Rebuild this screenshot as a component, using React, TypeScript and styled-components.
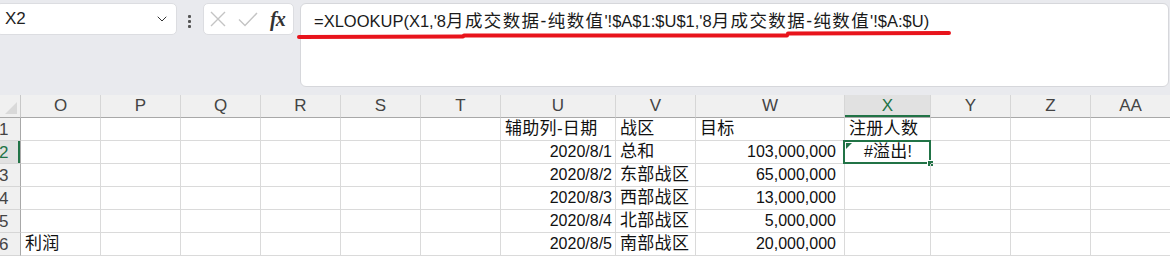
import React from "react";
import styled, { createGlobalStyle } from "styled-components";
import { ChevronDown } from "lucide-react";

const GREEN = "#217346";
const COLS = [
  { key: "O", w: 80 },
  { key: "P", w: 80 },
  { key: "Q", w: 80 },
  { key: "R", w: 80 },
  { key: "S", w: 80 },
  { key: "T", w: 80 },
  { key: "U", w: 115 },
  { key: "V", w: 80 },
  { key: "W", w: 149 },
  { key: "X", w: 86 },
  { key: "Y", w: 80 },
  { key: "Z", w: 80 },
  { key: "AA", w: 80 },
];
const TEMPLATE = `21px ${COLS.map((c) => c.w + "px").join(" ")}`;

type Align = "left" | "right" | "center";
type CellData = { text: string; align: Align; pad?: number };
type RowData = { n: number; cells: Record<string, CellData> };

const L = (text: string): CellData => ({ text, align: "left" });
const R = (text: string): CellData => ({ text, align: "right" });
const N = (text: string): CellData => ({ text, align: "right", pad: 8 });

const ROWS: RowData[] = [
  { n: 1, cells: { U: L("辅助列-日期"), V: L("战区"), W: L("目标"), X: L("注册人数") } },
  { n: 2, cells: { U: R("2020/8/1"), V: L("总和"), W: N("103,000,000"), X: { text: "#溢出!", align: "center" } } },
  { n: 3, cells: { U: R("2020/8/2"), V: L("东部战区"), W: N("65,000,000") } },
  { n: 4, cells: { U: R("2020/8/3"), V: L("西部战区"), W: N("13,000,000") } },
  { n: 5, cells: { U: R("2020/8/4"), V: L("北部战区"), W: N("5,000,000") } },
  { n: 6, cells: { O: L("利润"), U: R("2020/8/5"), V: L("南部战区"), W: N("20,000,000") } },
];

const Global = createGlobalStyle`
  html, body { margin: 0; padding: 0; background: #ffffff; overflow: hidden; }
  body { font-family: "Liberation Sans", "Noto Sans CJK SC", sans-serif; }
`;

const Page = styled.div`
  position: relative;
  width: 1170px;
  height: 256px;
  overflow: hidden;
  background: #ffffff;
`;

const Toolbar = styled.div`
  display: flex;
  align-items: flex-start;
  height: 95px;
  box-sizing: border-box;
  padding-top: 3px;
  background: #e9eaee;
`;

const NameBox = styled.div`
  display: flex;
  flex-shrink: 0;
  align-items: center;
  justify-content: space-between;
  box-sizing: border-box;
  margin-left: -4px;
  width: 181px;
  height: 32px;
  padding: 0 6px 0 8px;
  background: #ffffff;
  border: 1px solid #dcdde1;
  border-radius: 5px;
  font-size: 17px;
  color: #1f1f1f;
`;

const MoreDots = styled.div`
  display: flex;
  flex-shrink: 0;
  flex-direction: column;
  gap: 2px;
  margin: 12px 12px 0 11px;
  span {
    width: 3px;
    height: 3px;
    border-radius: 1px;
    background: #555;
  }
`;

const FxBox = styled.div`
  display: flex;
  flex-shrink: 0;
  align-items: center;
  box-sizing: border-box;
  width: 91px;
  height: 32px;
  padding: 0 4px 0 6px;
  gap: 12px;
  background: #ffffff;
  border: 1px solid #dcdde1;
  border-radius: 5px;
`;

const FxLabel = styled.span`
  font-family: "Liberation Serif", "DejaVu Serif", serif;
  font-style: italic;
  font-weight: bold;
  font-size: 20px;
  color: #333;
  letter-spacing: -1px;
`;

const FormulaBox = styled.div`
  flex: 1;
  box-sizing: border-box;
  margin-left: 6px;
  margin-right: 1px;
  height: 84px;
  padding: 5px 0 0 13px;
  background: #ffffff;
  border: 1px solid #d6d7db;
  border-radius: 6px;
  font-size: 16.5px;
  line-height: 24px;
  color: #1a1a1a;
  white-space: nowrap;
`;

const Cjk = styled.span`
  font-size: 17.5px;
  letter-spacing: 1.4px;
`;

const CellCjk = styled.span`
  font-size: 17px;
  letter-spacing: 0.3px;
`;

const Annotation = styled.svg`
  position: absolute;
  left: 0;
  top: 0;
  pointer-events: none;
`;

const Row = styled.div`
  display: grid;
  grid-template-columns: ${TEMPLATE};
  grid-template-rows: 23px;
  height: 23px;
`;

const Corner = styled.div`
  position: relative;
  box-sizing: border-box;
  background: #f0f0f0;
  border-right: 1px solid #c8c8c8;
  border-bottom: 1px solid #a8a8a8;
  &::after {
    content: "";
    position: absolute;
    right: 3px;
    bottom: 3px;
    border-style: solid;
    border-width: 0 0 12px 12px;
    border-color: transparent transparent #d9d9d9 transparent;
  }
`;

const ColHead = styled.div<{ $active?: boolean }>`
  box-sizing: border-box;
  background: ${(p) => (p.$active ? "#e1e1e1" : "#f0f0f0")};
  border-right: 1px solid #d6d6d6;
  border-bottom: 1px solid #a8a8a8;
  box-shadow: ${(p) => (p.$active ? `inset 0 -2px 0 ${GREEN}` : "none")};
  color: ${(p) => (p.$active ? GREEN : "#444")};
  font-size: 17px;
  line-height: 22px;
  text-align: center;
`;

const RowHead = styled.div<{ $active?: boolean }>`
  box-sizing: border-box;
  overflow: hidden;
  background: ${(p) => (p.$active ? "#e1e1e1" : "#f0f0f0")};
  border-right: 1px solid #a8a8a8;
  border-bottom: 1px solid #d6d6d6;
  box-shadow: ${(p) => (p.$active ? `inset -2px 0 0 ${GREEN}` : "none")};
  color: ${(p) => (p.$active ? GREEN : "#444")};
  font-size: 17px;
  line-height: 23px;
  text-indent: -1px;
  white-space: nowrap;
`;

const Cell = styled.div<{ $align: Align; $padRight: number }>`
  position: relative;
  box-sizing: border-box;
  height: 23px;
  border-right: 1px solid #dadada;
  border-bottom: 1px solid #dadada;
  padding: 0 ${(p) => p.$padRight}px 0 4px;
  font-size: 16px;
  line-height: 22px;
  color: #111;
  text-align: ${(p) => p.$align};
  white-space: nowrap;
`;

const Selection = styled.div`
  position: absolute;
  left: -2px;
  top: -1px;
  right: -1px;
  bottom: -1px;
  border: 2px solid ${GREEN};
  pointer-events: none;
`;

const ErrorFlag = styled.div`
  position: absolute;
  left: 1px;
  top: 1px;
  border-style: solid;
  border-width: 6px 6px 0 0;
  border-color: ${GREEN} transparent transparent transparent;
`;

const FillHandle = styled.div`
  position: absolute;
  right: -5px;
  bottom: -5px;
  width: 5px;
  height: 5px;
  background: ${GREEN};
  border: 1px solid #ffffff;
`;

function splitCjk(s: string) {
  const parts: { t: string; cjk: boolean }[] = [];
  const re = /([\u4e00-\u9fff](?:[\u4e00-\u9fff-]*[\u4e00-\u9fff])?)/g;
  let last = 0;
  let m: RegExpExecArray | null;
  while ((m = re.exec(s))) {
    if (m.index > last) parts.push({ t: s.slice(last, m.index), cjk: false });
    parts.push({ t: m[1], cjk: true });
    last = m.index + m[1].length;
  }
  if (last < s.length) parts.push({ t: s.slice(last), cjk: false });
  return parts;
}

const FORMULA = "=XLOOKUP(X1,'8月成交数据-纯数值'!$A$1:$U$1,'8月成交数据-纯数值'!$A:$U)";

export default function App() {
  return (
    <Page>
      <Global />
      <Toolbar>
        <NameBox>
          <span>X2</span>
          <ChevronDown size={16} strokeWidth={1.5} color="#333" />
        </NameBox>
        <MoreDots>
          <span />
          <span />
          <span />
        </MoreDots>
        <FxBox>
          <svg width="16" height="16" viewBox="0 0 16 16">
            <path d="M1 1 L15 15 M15 1 L1 15" stroke="#c4c4c4" strokeWidth="1.4" fill="none" />
          </svg>
          <svg width="20" height="15" viewBox="0 0 20 15">
            <path d="M1 7.5 L7 13.5 L19 1" stroke="#c4c4c4" strokeWidth="1.4" fill="none" />
          </svg>
          <FxLabel>fx</FxLabel>
        </FxBox>
        <FormulaBox>
          {splitCjk(FORMULA).map((p, i) =>
            p.cjk ? <Cjk key={i}>{p.t}</Cjk> : <span key={i}>{p.t}</span>
          )}
        </FormulaBox>
      </Toolbar>

      <Row>
        <Corner />
        {COLS.map((c) => (
          <ColHead key={c.key} $active={c.key === "X"}>
            {c.key}
          </ColHead>
        ))}
      </Row>
      {ROWS.map((r) => (
        <Row key={r.n}>
          <RowHead $active={r.n === 2}>{r.n}</RowHead>
          {COLS.map((c) => {
            const d = r.cells[c.key];
            const selected = r.n === 2 && c.key === "X";
            return (
              <Cell key={c.key} $align={d ? d.align : "left"} $padRight={d?.pad ?? 3}>
                {d
                  ? splitCjk(d.text).map((p, i) =>
                      p.cjk ? <CellCjk key={i}>{p.t}</CellCjk> : <span key={i}>{p.t}</span>
                    )
                  : null}
                {selected && (
                  <Selection>
                    <ErrorFlag />
                    <FillHandle />
                  </Selection>
                )}
              </Cell>
            );
          })}
        </Row>
      ))}

      <Annotation width="1170" height="60" viewBox="0 0 1170 60">
        <g stroke="#e8141c" strokeWidth="4" strokeLinecap="round" fill="none">
          <path d="M299 37 L463 36.5" />
          <path d="M464 35.5 L787 35.5" />
          <path d="M788 33.5 L949 33" />
        </g>
      </Annotation>
    </Page>
  );
}
